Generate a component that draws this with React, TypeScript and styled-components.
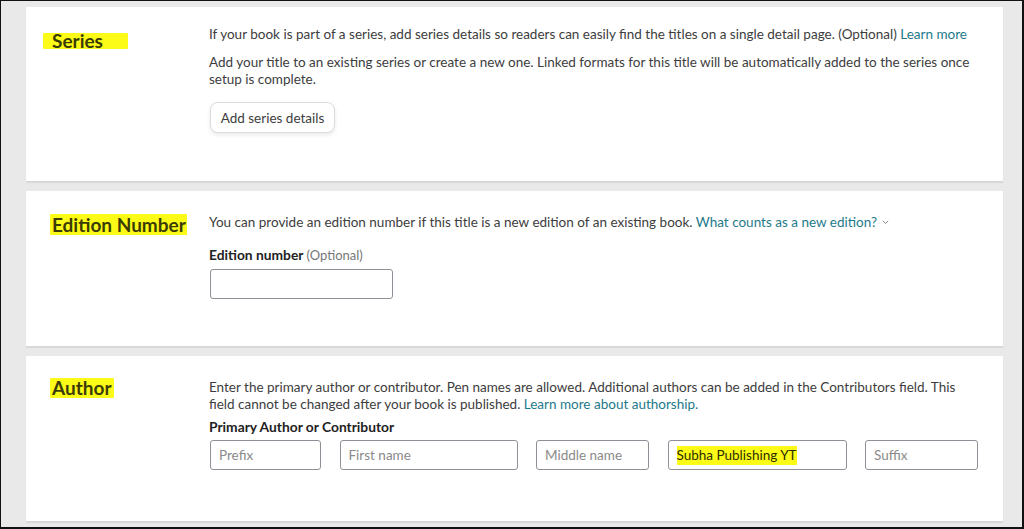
import React from "react";
import styled, { createGlobalStyle } from "styled-components";

const Global = createGlobalStyle`
  html, body { margin: 0; padding: 0; background: #e9e9e9; }
  * { box-sizing: border-box; }
  body { font-family: Lato, "Open Sans", Arial, sans-serif; color: #333; }
`;

const Frame = styled.div`
  width: 1024px;
  height: 529px;
  background: #e9e9e9;
  border-top: 1px solid #111;
  border-left: 1px solid #111;
  border-right: 2px solid #111;
  border-bottom: 2px solid #111;
  padding: 6px 19px 0 25px;
  display: flex;
  flex-direction: column;
  gap: 9px;
  overflow: hidden;
`;

const Card = styled.section<{ $h: number }>`
  background: #fff;
  height: ${(p) => p.$h}px;
  border-bottom: 1px solid #d6d6d6;
  box-shadow: 0 1px 1px rgba(0, 0, 0, 0.06);
  display: grid;
  grid-template-columns: 183px 1fr;
  padding: 0 26px 0 0;
  flex-shrink: 0;
`;

const HeadCell = styled.div<{ $pt: number; $pl: number }>`
  padding-top: ${(p) => p.$pt}px;
  padding-left: ${(p) => p.$pl}px;
`;

const Heading = styled.h2<{ $pl: number; $pr: number; $lh: number }>`
  display: inline-block;
  margin: 0;
  font-family: Lato, "Open Sans", Arial, sans-serif;
  font-size: 19px;
  font-weight: 700;
  line-height: ${(p) => p.$lh}px;
  color: #3b3b05;
  background: #fbfb17;
  padding: 0 ${(p) => p.$pr}px 0 ${(p) => p.$pl}px;
  border-radius: 1px;
`;

const Body = styled.div<{ $pt: number }>`
  display: flex;
  flex-direction: column;
  padding-top: ${(p) => p.$pt}px;
  font-size: 13.5px;
  line-height: 17px;
  color: #3d3d3d;
`;

const Para = styled.p<{ $mb?: number }>`
  margin: 0 0 ${(p) => p.$mb ?? 0}px 0;
`;

const Link = styled.a`
  color: #1d7a8a;
  text-decoration: none;
`;

const Chevron = styled.svg`
  display: inline-block;
  margin-left: 5px;
  vertical-align: 2px;
`;

const Button = styled.button`
  align-self: flex-start;
  height: 31px;
  width: 125px;
  margin-left: 1px;
  border: 1px solid #dcdcdc;
  border-radius: 8px;
  background: #fff;
  box-shadow: 0 2px 4px rgba(0, 0, 0, 0.09);
  font-family: Lato, "Open Sans", Arial, sans-serif;
  font-size: 13.5px;
  color: #3d3d3d;
  padding: 0;
`;

const Label = styled.div<{ $mt: number }>`
  margin-top: ${(p) => p.$mt}px;
  font-weight: 700;
  font-size: 13.8px;
  color: #222;
  line-height: 17px;
`;

const Optional = styled.span`
  font-weight: 400;
  color: #777;
  font-size: 13px;
`;

const Input = styled.div<{ $w: number }>`
  width: ${(p) => p.$w}px;
  height: 30px;
  border: 1px solid #8d9096;
  border-radius: 3px;
  background: #fff;
  padding: 0 8px;
  display: flex;
  align-items: center;
  font-size: 13.5px;
  color: #8a8a8a;
  flex-shrink: 0;
`;

const Filled = styled.span`
  color: #2e2e00;
  background: #fbfb17;
  padding: 1px 0;
`;

const InputRow = styled.div<{ $w: number; $mt: number }>`
  display: flex;
  margin-top: ${(p) => p.$mt}px;
  margin-left: 1px;
  justify-content: space-between;
  width: ${(p) => p.$w}px;
`;

export default function App() {
  return (
    <>
      <Global />
      <Frame>
        <Card $h={175}>
          <HeadCell $pt={25} $pl={17}>
            <Heading $pl={9} $pr={25} $lh={16}>Series</Heading>
          </HeadCell>
          <Body $pt={19}>
            <Para $mb={11}>
              If your book is part of a series, add series details so readers can easily find the titles on a single detail page. (Optional){" "}
              <Link href="#">Learn more</Link>
            </Para>
            <Para $mb={14}>
              Add your title to an existing series or create a new one. Linked formats for this title will be automatically added to the series once setup is complete.
            </Para>
            <Button>Add series details</Button>
          </Body>
        </Card>

        <Card $h={156}>
          <HeadCell $pt={23} $pl={24}>
            <Heading $pl={2} $pr={1} $lh={21}>Edition Number</Heading>
          </HeadCell>
          <Body $pt={23}>
            <Para>
              You can provide an edition number if this title is a new edition of an existing book.{" "}
              <Link href="#">What counts as a new edition?</Link>
              <Chevron width="7" height="5" viewBox="0 0 7 5">
                <path d="M0.8 0.8 L3.5 3.6 L6.2 0.8" fill="none" stroke="#8a8a8a" strokeWidth="1" />
              </Chevron>
            </Para>
            <Label $mt={15}>
              Edition number <Optional>(Optional)</Optional>
            </Label>
            <InputRow $w={183} $mt={5}>
              <Input $w={183} />
            </InputRow>
          </Body>
        </Card>

        <Card $h={166}>
          <HeadCell $pt={22} $pl={24}>
            <Heading $pl={2} $pr={3} $lh={20}>Author</Heading>
          </HeadCell>
          <Body $pt={23}>
            <Para>
              Enter the primary author or contributor. Pen names are allowed. Additional authors can be added in the Contributors field. This field cannot be changed after your book is published.{" "}
              <Link href="#">Learn more about authorship.</Link>
            </Para>
            <Label $mt={5}>Primary Author or Contributor</Label>
            <InputRow $w={768} $mt={5}>
              <Input $w={111}>Prefix</Input>
              <Input $w={178}>First name</Input>
              <Input $w={113}>Middle name</Input>
              <Input $w={179}>
                <Filled>Subha Publishing YT</Filled>
              </Input>
              <Input $w={113}>Suffix</Input>
            </InputRow>
          </Body>
        </Card>
      </Frame>
    </>
  );
}
